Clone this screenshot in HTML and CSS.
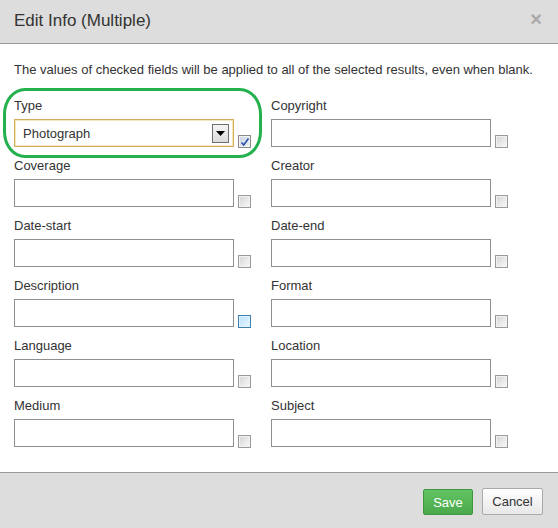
FILE: index.html
```html
<!DOCTYPE html>
<html>
<head>
<meta charset="utf-8">
<link rel="stylesheet" href="styles.css">
</head>
<body>
<div class="modal">
  <div class="header">
    <div class="title">Edit Info (Multiple)</div>
    <div class="close">×</div>
  </div>
  <div class="content">
    <p class="intro">The values of checked fields will be applied to all of the selected results, even when blank.</p>
    <div class="grid">
      <div class="field">
        <div class="label">Type</div>
        <div class="row">
          <div class="select"><span>Photograph</span><span class="arrow"><svg width="9" height="5" viewBox="0 0 9 5"><path d="M0 0h9L4.5 5z" fill="#000"/></svg></span></div>
          <span class="cb checked"><svg width="10" height="10" viewBox="0 0 10 10"><path d="M1.5 5.5l2.2 2.5L8.5 1.5" fill="none" stroke="#2a4fa8" stroke-width="1.6"/></svg></span>
        </div>
      </div>
      <div class="field">
        <div class="label">Copyright</div>
        <div class="row"><div class="input"></div><span class="cb"></span></div>
      </div>
      <div class="field">
        <div class="label">Coverage</div>
        <div class="row"><div class="input"></div><span class="cb"></span></div>
      </div>
      <div class="field">
        <div class="label">Creator</div>
        <div class="row"><div class="input"></div><span class="cb"></span></div>
      </div>
      <div class="field">
        <div class="label">Date-start</div>
        <div class="row"><div class="input"></div><span class="cb"></span></div>
      </div>
      <div class="field">
        <div class="label">Date-end</div>
        <div class="row"><div class="input"></div><span class="cb"></span></div>
      </div>
      <div class="field">
        <div class="label">Description</div>
        <div class="row"><div class="input"></div><span class="cb hover"></span></div>
      </div>
      <div class="field">
        <div class="label">Format</div>
        <div class="row"><div class="input"></div><span class="cb"></span></div>
      </div>
      <div class="field">
        <div class="label">Language</div>
        <div class="row"><div class="input"></div><span class="cb"></span></div>
      </div>
      <div class="field">
        <div class="label">Location</div>
        <div class="row"><div class="input"></div><span class="cb"></span></div>
      </div>
      <div class="field">
        <div class="label">Medium</div>
        <div class="row"><div class="input"></div><span class="cb"></span></div>
      </div>
      <div class="field">
        <div class="label">Subject</div>
        <div class="row"><div class="input"></div><span class="cb"></span></div>
      </div>
    </div>
    <div class="highlight"></div>
  </div>
  <div class="footer">
    <button class="btn save">Save</button>
    <button class="btn cancel">Cancel</button>
  </div>
</div>
</body>
</html>
```
FILE: styles.css
```css
html, body {
  margin: 0;
  padding: 0;
  background: #fff;
}
body {
  font-family: "Liberation Sans", Arial, sans-serif;
  font-size: 13px;
  color: #333;
}
.modal {
  width: 558px;
  height: 528px;
  display: flex;
  flex-direction: column;
}
.header {
  height: 43px;
  background: #dddddd;
  border-bottom: 1px solid #999;
  display: flex;
  align-items: center;
  justify-content: space-between;
  padding: 0 14px;
}
.title {
  font-size: 17px;
  color: #333;
  margin-top: -1px;
}
.close {
  font-size: 20px;
  font-weight: bold;
  color: #aaa;
  margin-top: -5px;
  margin-right: 2px;
}
.content {
  position: relative;
  padding: 19px 14px 0 14px;
  flex: 1;
}
.intro {
  margin: 0;
  line-height: 14px;
}
.grid {
  margin-top: 22px;
  display: grid;
  grid-template-columns: 257px 257px;
  row-gap: 12px;
}
.field {
  display: flex;
  flex-direction: column;
}
.label {
  line-height: 14px;
  margin-bottom: 6px;
}
.row {
  display: flex;
  align-items: flex-end;
}
.input {
  width: 218px;
  height: 26px;
  border: 1px solid #8f8f8f;
  background: #fff;
}
.select {
  height: 26px;
  border: 1px solid #d4ae5c;
  box-shadow: inset 0 0 0 1px #f4e6bd;
  background: #fff;
  display: flex;
  align-items: center;
  justify-content: space-between;
  padding-left: 8px;
  padding-right: 4px;
  width: 206px;
  font-size: 13px;
  color: #333;
}
.arrow {
  width: 15px;
  height: 17px;
  border: 1px solid #6f6f6f;
  background: linear-gradient(#f4f4f4, #dcdcdc);
  display: flex;
  align-items: center;
  justify-content: center;
}
.cb {
  width: 11px;
  height: 11px;
  border: 1px solid #9a9a9a;
  background: linear-gradient(135deg, #d4d4d4, #fafafa);
  box-shadow: inset 0 0 0 1px #f2f2f2;
  margin-left: 4px;
  margin-bottom: -1px;
  display: flex;
  align-items: center;
  justify-content: center;
}
.cb.checked {
  border-color: #8a8a8a;
  background: linear-gradient(135deg, #c9d3e3, #f2f4f8);
}
.cb.hover {
  border-color: #3c7fb1;
  background: linear-gradient(135deg, #b8e2fb, #e9f6fe);
  box-shadow: inset 0 0 0 1px #dff2fd;
}
.highlight {
  position: absolute;
  left: 3px;
  top: 44px;
  width: 253px;
  height: 64px;
  border: 3px solid #22b14c;
  border-radius: 22px / 26px;
  pointer-events: none;
}
.footer {
  height: 56px;
  background: #dddddd;
  border-top: 1px solid #999;
  display: flex;
  justify-content: flex-end;
  align-items: flex-start;
  padding: 15px 15px 0 0;
  box-sizing: border-box;
  gap: 9px;
}
.btn {
  font-family: "Liberation Sans", Arial, sans-serif;
  font-size: 13px;
  height: 27px;
  padding: 0 6px;
  border-radius: 2px;
  cursor: pointer;
}
.save {
  width: 50px;
  color: #fff;
  background: linear-gradient(#62c462, #4aa84a);
  border: 1px solid #3e963e;
  height: 26px;
  margin-top: 1px;
}
.cancel {
  width: 61px;
  color: #333;
  background: linear-gradient(#ffffff, #e8e8e8);
  border: 1px solid #aaa;
}
```
